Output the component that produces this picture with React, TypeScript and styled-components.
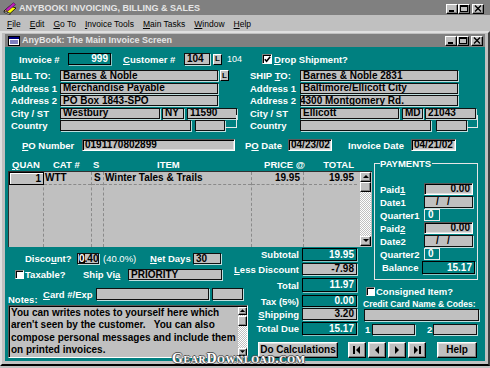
import React from "react";
import styled, { createGlobalStyle, css } from "styled-components";

const TEAL = "#008080";
const FACE = "#c0c0c0";
const FONT = `"Liberation Sans", Arial, Helvetica, sans-serif`;

const GlobalStyle = createGlobalStyle`
  *, *::before, *::after { box-sizing: border-box; }
  html, body { margin: 0; padding: 0; background: ${FACE}; }
  body { width: 490px; height: 368px; overflow: hidden; font-family: ${FONT}; }
  #root { width: 490px; height: 368px; }
`;

const Screen = styled.div`
  position: relative;
  width: 490px;
  height: 368px;
  display: flex;
  flex-direction: column;
  background: ${FACE};
  overflow: hidden;
`;

const AppTitleBar = styled.div`
  flex: none;
  height: 15px;
  padding: 2px 6px 0 3px;
  display: flex;
  align-items: center;
  background: #808080;
  color: #e6e6e6;
  font: bold 9px/11px ${FONT};
  white-space: nowrap;
`;

const ChildTitleBar = styled(AppTitleBar)`
  height: 13px;
  padding: 0 2px 0 3px;
`;

const TitleText = styled.span<{ $ml: number }>`
  margin-left: ${(p) => p.$ml}px;
`;

const CtlGroup = styled.div`
  margin-left: auto;
  display: flex;
  align-items: center;
`;

const CtlButton = styled.span<{ $gap?: number }>`
  flex: none;
  width: 12px;
  height: 10px;
  margin-left: ${(p) => p.$gap ?? 0}px;
  background: ${FACE};
  border: 1px solid;
  border-color: #fff #000 #000 #fff;
  box-shadow: inset -1px -1px #808080;
  display: flex;
  align-items: center;
  justify-content: center;
`;

const MenuBar = styled.div`
  flex: none;
  height: 16px;
  padding: 1px 0 0 2.5px;
  display: flex;
  align-items: center;
  font: 8.5px/10px ${FONT};
  color: #000;
`;

const MenuItem = styled.span`
  padding: 0 4.5px;
  white-space: nowrap;
`;

const U = styled.span`
  text-decoration: underline;
  text-underline-offset: 1px;
`;

const ChildWindow = styled.div`
  flex: none;
  height: 335px;
  display: flex;
  flex-direction: column;
  border: 2px solid;
  border-color: #dfdfdf #404040 #000 #dfdfdf;
  padding: 1px 3px 3px 3px;
  background: ${FACE};
`;

const Teal = styled.div`
  flex: 1;
  display: flex;
  flex-direction: column;
  background: ${TEAL};
  color: #fff;
  font: bold 9.5px/11px ${FONT};
`;

/* ---------- generic form parts ---------- */

const LabelBox = styled.span<{
  $w?: number;
  $ml?: number;
  $pl?: number;
  $end?: boolean;
  $light?: boolean;
  $size?: number;
}>`
  flex: none;
  ${(p) => p.$w !== undefined && css`width: ${p.$w}px;`}
  margin-left: ${(p) => p.$ml ?? 0}px;
  padding-left: ${(p) => p.$pl ?? 0}px;
  display: flex;
  align-items: center;
  justify-content: ${(p) => (p.$end ? "flex-end" : "flex-start")};
  white-space: pre;
  color: #fff;
  font-weight: ${(p) => (p.$light ? "normal" : "bold")};
  font-size: ${(p) => p.$size ?? 9.5}px;
  line-height: 11px;
`;

type LabelProps = React.ComponentProps<typeof LabelBox>;

const Label = ({ children, ...rest }: LabelProps) => (
  <LabelBox {...rest}>
    <span>{children}</span>
  </LabelBox>
);

type FieldKind = "gray" | "deep" | "teal" | "quarter";

const kindStyles: Record<FieldKind, ReturnType<typeof css>> = {
  gray: css`
    background: ${FACE};
    color: #000;
    border: 1px solid #101010;
    box-shadow: 1px 1px 0 rgba(255, 255, 255, 0.75);
  `,
  deep: css`
    background: ${FACE};
    color: #000;
    border: 1px solid;
    border-color: #5a5a5a #fff #fff #5a5a5a;
    box-shadow: inset 1px 1px #000, inset -1px -1px #dfdfdf;
  `,
  teal: css`
    background: ${TEAL};
    color: #fff;
    border: 1px solid #000;
    box-shadow: 1px 1px 0 rgba(255, 255, 255, 0.55);
  `,
  quarter: css`
    background: ${TEAL};
    color: #fff;
    border: 1px solid #e8e8e8;
  `,
};

const Field = styled.div<{
  $w: number;
  $h?: number;
  $ml?: number;
  $kind?: FieldKind;
  $align?: "left" | "right" | "center";
  $pl?: number;
  $indent?: number;
}>`
  flex: none;
  width: ${(p) => p.$w}px;
  height: ${(p) => p.$h ?? 11}px;
  margin-left: ${(p) => p.$ml ?? 0}px;
  display: flex;
  align-items: center;
  justify-content: ${(p) =>
    p.$align === "right" ? "flex-end" : p.$align === "center" ? "center" : "flex-start"};
  padding: 0 2px 0 ${(p) => p.$pl ?? 2}px;
  overflow: hidden;
  white-space: pre;
  font: bold 10px/10px ${FONT};
  text-indent: ${(p) => p.$indent ?? 0}px;
  ${(p) => kindStyles[p.$kind ?? "gray"]}
`;

const Sel = styled.span`
  background: #000;
  color: #fff;
`;

const SmallButton = styled.span<{ $ml?: number }>`
  flex: none;
  width: 9px;
  height: 11px;
  margin-left: ${(p) => p.$ml ?? 0}px;
  background: ${FACE};
  border: 1px solid;
  border-color: #fff #000 #000 #fff;
  color: #000;
  display: flex;
  align-items: center;
  justify-content: center;
  font: bold 8px/8px ${FONT};
`;

const CheckBox = styled.span<{ $ml?: number; $size?: number }>`
  flex: none;
  width: ${(p) => p.$size ?? 10}px;
  height: ${(p) => p.$size ?? 10}px;
  margin-left: ${(p) => p.$ml ?? 0}px;
  background: #fff;
  border: 1px solid;
  border-color: #808080 #fff #fff #808080;
  box-shadow: inset 1px 1px #000;
  display: flex;
  align-items: center;
  justify-content: center;
`;

/* ---------- top section ---------- */

const InvoiceRow = styled.div`
  flex: none;
  margin-top: 6px;
  height: 12px;
  padding-left: 14px;
  display: flex;
  align-items: center;
`;

const AddressRow = styled.div`
  flex: none;
  margin-top: 5px;
  display: flex;
`;

const AddressBlock = styled.div<{ $ml: number; $w?: number; $labelW: number }>`
  flex: none;
  margin-left: ${(p) => p.$ml}px;
  ${(p) => p.$w !== undefined && css`width: ${p.$w}px;`}
  display: grid;
  grid-template-columns: ${(p) => p.$labelW}px auto;
  grid-auto-rows: 11px;
  row-gap: 1.5px;
`;

const AddrFields = styled.div`
  display: flex;
  align-items: center;
`;

const Bracket = styled.span<{ $w: number }>`
  flex: none;
  align-self: flex-start;
  width: ${(p) => p.$w}px;
  height: 13px;
  margin-top: -5px;
  border-right: 1px solid #e8e8e8;
  border-bottom: 1px solid #e8e8e8;
`;

const PoRow = styled.div`
  flex: none;
  margin-top: 8px;
  height: 12px;
  padding-left: 17px;
  display: flex;
  align-items: center;
`;

/* ---------- lower section ---------- */

const Lower = styled.div`
  flex: none;
  margin: 7px 0 0 3px;
  display: grid;
  grid-template-columns: 242px 112px 12px 106px;
  grid-template-rows: 89px 34px 56px 24px;
  grid-template-areas:
    "table table table pay"
    "form totals . pay"
    "form totals right right"
    "form buttons buttons buttons";
`;

const LineItems = styled.div`
  grid-area: table;
  display: flex;
  flex-direction: column;
`;

const GridHeader = styled.div`
  height: 13px;
  display: flex;
  align-items: center;
`;

const HeadCell = styled.span<{ $w: number; $pl?: number; $pr?: number; $align?: "left" | "center" | "right" }>`
  flex: none;
  width: ${(p) => p.$w}px;
  padding-left: ${(p) => p.$pl ?? 0}px;
  padding-right: ${(p) => p.$pr ?? 0}px;
  text-align: ${(p) => p.$align ?? "left"};
  white-space: nowrap;
  color: #fff;
  font: bold 9.5px/11px ${FONT};
`;

const GridBody = styled.div`
  width: 364px;
  height: 76px;
  display: flex;
  background: ${FACE};
  border-top: 1px solid #303030;
  border-left: 1px solid #303030;
`;

const GridColumn = styled.div<{ $w: number; $last?: boolean }>`
  flex: none;
  width: ${(p) => p.$w}px;
  display: flex;
  flex-direction: column;
  border-right: 1px dashed ${(p) => (p.$last ? "transparent" : "#8a8a8a")};
`;

const GridCell = styled.div<{ $align?: "left" | "center" | "right"; $pl?: number; $pr?: number; $focus?: boolean }>`
  height: 13px;
  display: flex;
  align-items: center;
  justify-content: ${(p) =>
    p.$align === "right" ? "flex-end" : p.$align === "center" ? "center" : "flex-start"};
  padding: 0 ${(p) => p.$pr ?? 0}px 0 ${(p) => p.$pl ?? 0}px;
  border-bottom: 1px dashed #8a8a8a;
  color: #000;
  white-space: pre;
  font: bold 10px/10px ${FONT};
  ${(p) =>
    p.$focus &&
    css`
      border: 1px solid #000;
      box-shadow: inset 1px 1px #fff;
      margin-right: -1px;
    `}
`;

const GridScrollCol = styled.div`
  flex: none;
  width: 14px;
  padding: 0 1px 1px 2px;
  display: flex;
`;

const VScroll = styled.div<{ $w: number }>`
  flex: none;
  width: ${(p) => p.$w}px;
  display: flex;
  flex-direction: column;
  background: repeating-conic-gradient(#fff 0 25%, ${FACE} 0 50%) 0 0 / 2px 2px;
`;

const ScrollPart = styled.span<{ $h: number; $mt?: string }>`
  flex: none;
  height: ${(p) => p.$h}px;
  margin-top: ${(p) => p.$mt ?? "0"};
  background: ${FACE};
  border: 1px solid;
  border-color: #fff #000 #000 #fff;
  box-shadow: inset -1px -1px #808080;
  display: flex;
  align-items: center;
  justify-content: center;
`;

/* payments */

const PayFrame = styled.div`
  grid-area: pay;
  margin-top: 5px;
  width: 104px;
  height: 117px;
  border: 1px solid #e6e6e6;
  display: flex;
  flex-direction: column;
`;

const PayLegend = styled.span`
  align-self: flex-start;
  margin: -6px 0 0 5px;
  padding: 0 1px 0 0;
  height: 11px;
  background: ${TEAL};
  font: bold 9.5px/11px ${FONT};
`;

const PayRow = styled.div<{ $mt: number; $h?: number }>`
  flex: none;
  margin-top: ${(p) => p.$mt}px;
  height: ${(p) => p.$h ?? 12}px;
  display: flex;
  align-items: center;
`;

/* totals */

const TotalsColumn = styled.div`
  grid-area: totals;
  display: flex;
  flex-direction: column;
`;

const TotalRow = styled.div<{ $mt: number; $h: number }>`
  flex: none;
  margin-top: ${(p) => p.$mt}px;
  height: ${(p) => p.$h}px;
  display: flex;
  align-items: center;
`;

/* right column */

const RightColumn = styled.div`
  grid-area: right;
  display: flex;
  flex-direction: column;
`;

const RightRow = styled.div<{ $mt: number; $h: number }>`
  flex: none;
  margin-top: ${(p) => p.$mt}px;
  height: ${(p) => p.$h}px;
  display: flex;
  align-items: center;
`;

/* buttons */

const ButtonRow = styled.div`
  grid-area: buttons;
  display: flex;
  align-items: flex-start;
  padding-top: 5px;
`;

const PushButton = styled.span<{ $w: number; $ml: number }>`
  flex: none;
  width: ${(p) => p.$w}px;
  height: 16px;
  margin-left: ${(p) => p.$ml}px;
  background: ${FACE};
  border: 1px solid;
  border-color: #fff #000 #000 #fff;
  box-shadow: inset -1px -1px #808080, inset 1px 1px #dfdfdf;
  display: flex;
  align-items: center;
  justify-content: center;
  color: #000;
  font: bold 10px/10px ${FONT};
  white-space: nowrap;
`;

/* left form */

const FormColumn = styled.div`
  grid-area: form;
  display: flex;
  flex-direction: column;
`;

const FormRow = styled.div<{ $mt: number; $h: number }>`
  flex: none;
  margin-top: ${(p) => p.$mt}px;
  height: ${(p) => p.$h}px;
  display: flex;
  align-items: center;
`;

const NotesLabel = styled.span`
  flex: none;
  align-self: flex-end;
  width: 35px;
  height: 10px;
  margin-bottom: -5px;
  color: #fff;
  font: bold 9.5px/10px ${FONT};
`;

const NotesBox = styled.div`
  flex: none;
  margin-top: 5px;
  width: 240px;
  height: 53px;
  display: flex;
  background: ${FACE};
  border: 1px solid;
  border-color: #5a5a5a #fff #fff #5a5a5a;
  box-shadow: inset 1px 1px #000;
`;

const NotesText = styled.div`
  flex: 1;
  padding: 1px 0 0 2px;
  color: #000;
  font: bold 10px/12.3px ${FONT};
  white-space: pre;
`;

const NotesScroll = styled.div`
  flex: none;
  padding: 1px 0 1px 0;
  display: flex;
`;

const Watermark = styled.span`
  position: absolute;
  left: 172px;
  top: 351px;
  color: #fff;
  font: bold 14px/16px "Liberation Serif", "Times New Roman", serif;
  font-variant: small-caps;
  letter-spacing: 0.6px;
  text-shadow: 1px 0 #555, -1px 0 #555, 0 1px #555, 0 -1px #555;
  pointer-events: none;
`;

/* ---------- icons ---------- */

const AppIcon = () => (
  <svg width="14" height="13" viewBox="0 0 14 13">
    <path d="M1 9 L7 4 L13 6 L7 11.5 Z" fill="#ffff00" stroke="#000" strokeWidth="0.8" />
    <path d="M1 9 L7 11.5 L7 12.8 L1 10.3 Z" fill="#fff" stroke="#000" strokeWidth="0.6" />
    <path d="M2.5 7.5 L10.5 0.8 L12.5 2.6 L4.5 9.3 Z" fill="#c020c0" stroke="#400040" strokeWidth="0.6" />
    <path d="M2.5 7.5 L4.5 9.3 L1.5 10 Z" fill="#ffd0a0" stroke="#000" strokeWidth="0.5" />
  </svg>
);

const ChildIcon = () => (
  <svg width="12" height="10" viewBox="0 0 12 10">
    <rect x="0.5" y="0.5" width="11" height="9" fill="#fff" stroke="#000" />
    <rect x="1" y="1" width="10" height="2" fill="#000080" />
    <path d="M2 5 H10 M2 7 H10" stroke="#000080" strokeWidth="1" />
  </svg>
);

const MinGlyph = () => (
  <svg width="8" height="7" viewBox="0 0 8 7">
    <rect x="1" y="5" width="5" height="2" fill="#000" />
  </svg>
);
const MaxGlyph = () => (
  <svg width="8" height="7" viewBox="0 0 8 7">
    <rect x="0.5" y="0.5" width="7" height="6" fill="none" stroke="#000" />
    <rect x="0" y="0" width="8" height="2" fill="#000" />
  </svg>
);
const CloseGlyph = () => (
  <svg width="8" height="7" viewBox="0 0 8 7">
    <path d="M1 0.5 L7 6.5 M7 0.5 L1 6.5" stroke="#000" strokeWidth="1.4" />
  </svg>
);

const Tri = ({ dir }: { dir: "up" | "down" }) => (
  <svg width="8" height="8" viewBox="0 0 8 8">
    <path d={dir === "up" ? "M1 5 L4 2 L7 5 Z" : "M1 2 L4 5 L7 2 Z"} fill="#000" />
  </svg>
);

const NavGlyph = ({ kind }: { kind: "first" | "prev" | "next" | "last" }) => {
  const parts: Record<string, React.ReactNode> = {
    first: (
      <>
        <rect x="1" y="1" width="2" height="8" fill="#000" />
        <path d="M8 1 L4 5 L8 9 Z" fill="#000" />
      </>
    ),
    prev: <path d="M7 1 L3 5 L7 9 Z" fill="#000" />,
    next: <path d="M3 1 L7 5 L3 9 Z" fill="#000" />,
    last: (
      <>
        <path d="M2 1 L6 5 L2 9 Z" fill="#000" />
        <rect x="7" y="1" width="2" height="8" fill="#000" />
      </>
    ),
  };
  return (
    <svg width="10" height="10" viewBox="0 0 10 10">
      {parts[kind]}
    </svg>
  );
};

const Check = () => (
  <svg width="7" height="7" viewBox="0 0 7 7">
    <path d="M0.8 3.2 L2.6 5.2 L6.2 0.8" fill="none" stroke="#000" strokeWidth="1.6" />
  </svg>
);

/* ---------- app ---------- */

export default function App() {
  return (
    <>
      <GlobalStyle />
      <Screen>
        <AppTitleBar>
          <AppIcon />
          <TitleText $ml={2}>ANYBOOK! INVOICING, BILLING &amp; SALES</TitleText>
          <CtlGroup>
            <CtlButton><MinGlyph /></CtlButton>
            <CtlButton><MaxGlyph /></CtlButton>
            <CtlButton $gap={2}><CloseGlyph /></CtlButton>
          </CtlGroup>
        </AppTitleBar>

        <MenuBar>
          <MenuItem><U>F</U>ile</MenuItem>
          <MenuItem><U>E</U>dit</MenuItem>
          <MenuItem><U>G</U>o To</MenuItem>
          <MenuItem><U>I</U>nvoice Tools</MenuItem>
          <MenuItem><U>M</U>ain Tasks</MenuItem>
          <MenuItem><U>W</U>indow</MenuItem>
          <MenuItem><U>H</U>elp</MenuItem>
        </MenuBar>

        <ChildWindow>
          <ChildTitleBar>
            <ChildIcon />
            <TitleText $ml={2}>AnyBook: The Main Invoice Screen</TitleText>
            <CtlGroup>
              <CtlButton><MinGlyph /></CtlButton>
              <CtlButton><MaxGlyph /></CtlButton>
              <CtlButton $gap={2}><CloseGlyph /></CtlButton>
            </CtlGroup>
          </ChildTitleBar>

          <Teal>
            <InvoiceRow>
              <Label $w={49}>Invoice #</Label>
              <Field $w={43} $h={12} $kind="teal" $align="right">999</Field>
              <Label $w={61} $ml={12}><U>C</U>ustomer #</Label>
              <Field $w={26} $h={12} $align="left">104</Field>
              <SmallButton $ml={3}>L</SmallButton>
              <Label $w={35} $ml={5} $light $size={9}>104</Label>
              <CheckBox><Check /></CheckBox>
              <Label $ml={2}><U>D</U>rop Shipment?</Label>
            </InvoiceRow>

            <AddressRow>
              <AddressBlock $ml={6} $w={239} $labelW={49}>
                <Label><U>B</U>ILL TO:</Label>
                <AddrFields>
                  <Field $w={158}>Barnes &amp; Noble</Field>
                  <SmallButton $ml={2}>L</SmallButton>
                </AddrFields>
                <Label>Address 1</Label>
                <AddrFields><Field $w={158}>Merchandise Payable</Field></AddrFields>
                <Label>Address 2</Label>
                <AddrFields><Field $w={158}>PO Box 1843-SPO</Field></AddrFields>
                <Label>City / ST</Label>
                <AddrFields>
                  <Field $w={100}>Westbury</Field>
                  <Field $w={22} $ml={2}>NY</Field>
                  <Field $w={50} $ml={3}>11590</Field>
                </AddrFields>
                <Label>Country</Label>
                <AddrFields>
                  <Field $w={131} />
                  <Field $w={30} $ml={4} />
                  <Bracket $w={12} />
                </AddrFields>
              </AddressBlock>

              <AddressBlock $ml={0} $labelW={50}>
                <Label>SHIP <U>T</U>O:</Label>
                <AddrFields><Field $w={158}>Barnes &amp; Noble 2831</Field></AddrFields>
                <Label>Address 1</Label>
                <AddrFields><Field $w={158}>Baltimore/Ellicott City</Field></AddrFields>
                <Label>Address 2</Label>
                <AddrFields><Field $w={158} $indent={-3}>4300 Montgomery Rd.</Field></AddrFields>
                <Label>City / ST</Label>
                <AddrFields>
                  <Field $w={99}>Ellicott</Field>
                  <Field $w={21} $ml={3}>MD</Field>
                  <Field $w={51} $ml={2}>21043</Field>
                </AddrFields>
                <Label>Country</Label>
                <AddrFields>
                  <Field $w={131} />
                  <Field $w={31} $ml={5} />
                  <Bracket $w={11} />
                </AddrFields>
              </AddressBlock>
            </AddressRow>

            <PoRow>
              <Label $w={60}><U>P</U>O Number</Label>
              <Field $w={153} $h={12} $kind="deep">0191170802899</Field>
              <Label $w={43} $ml={10}>P<U>O</U> Date</Label>
              <Field $w={44} $h={12} $kind="deep">04/23/02</Field>
              <Label $w={63} $ml={16}>Invoice Date</Label>
              <Field $w={45} $h={12} $kind="deep">04/21/02</Field>
            </PoRow>

            <Lower>
              <LineItems>
                <GridHeader>
                  <HeadCell $w={36} $align="center"><U>Q</U>UAN</HeadCell>
                  <HeadCell $w={48} $pl={9}>CAT #</HeadCell>
                  <HeadCell $w={11} $pl={1}>S</HeadCell>
                  <HeadCell $w={148} $pl={54}>ITEM</HeadCell>
                  <HeadCell $w={54} $align="right">PRICE @</HeadCell>
                  <HeadCell $w={51} $pr={2} $align="right">TOTAL</HeadCell>
                </GridHeader>
                <GridBody>
                  <GridColumn $w={35}>
                    <GridCell $align="right" $pr={2} $focus>1</GridCell>
                  </GridColumn>
                  <GridColumn $w={48}>
                    <GridCell $pl={1}>WTT</GridCell>
                  </GridColumn>
                  <GridColumn $w={12}>
                    <GridCell $pl={2}>S</GridCell>
                  </GridColumn>
                  <GridColumn $w={148}>
                    <GridCell $pl={1}>Winter Tales &amp; Trails</GridCell>
                  </GridColumn>
                  <GridColumn $w={52}>
                    <GridCell $align="right" $pr={3}>19.95</GridCell>
                  </GridColumn>
                  <GridColumn $w={54} $last>
                    <GridCell $align="right" $pr={3}>19.95</GridCell>
                  </GridColumn>
                  <GridScrollCol>
                    <VScroll $w={11}>
                      <ScrollPart $h={10}><Tri dir="up" /></ScrollPart>
                      <ScrollPart $h={10} />
                      <ScrollPart $h={10} $mt="auto"><Tri dir="down" /></ScrollPart>
                    </VScroll>
                  </GridScrollCol>
                </GridBody>
              </LineItems>

              <PayFrame>
                <PayLegend>PAYMENTS</PayLegend>
                <PayRow $mt={14}>
                  <Label $w={49} $pl={5}>Paid<U>1</U></Label>
                  <Field $w={49} $h={12} $kind="deep" $align="right">0.00</Field>
                </PayRow>
                <PayRow $mt={1}>
                  <Label $w={49} $pl={5}>Date1</Label>
                  <Field $w={49} $h={12} $pl={11}>{"/   /"}</Field>
                </PayRow>
                <PayRow $mt={1}>
                  <Label $w={49} $pl={5}>Quarter1</Label>
                  <Field $w={16} $h={12} $kind="quarter" $pl={3}>0</Field>
                </PayRow>
                <PayRow $mt={1}>
                  <Label $w={49} $pl={5}>Paid<U>2</U></Label>
                  <Field $w={49} $h={12} $kind="deep" $align="right">0.00</Field>
                </PayRow>
                <PayRow $mt={1}>
                  <Label $w={49} $pl={5}>Date2</Label>
                  <Field $w={49} $h={12} $pl={11}>{"/   /"}</Field>
                </PayRow>
                <PayRow $mt={1}>
                  <Label $w={49} $pl={5}>Quarter2</Label>
                  <Field $w={16} $h={12} $kind="quarter" $pl={3}>0</Field>
                </PayRow>
                <PayRow $mt={1} $h={13}>
                  <Label $w={47} $pl={7}>Balance</Label>
                  <Field $w={53} $h={13} $kind="teal" $align="right">15.17</Field>
                </PayRow>
              </PayFrame>

              <FormColumn>
                <FormRow $mt={6} $h={11}>
                  <Label $w={52} $ml={17}>Disco<U>u</U>nt?</Label>
                  <Field $w={22} $pl={1}><Sel>0</Sel>.40</Field>
                  <Label $w={47} $ml={4} $light>(40.0%)</Label>
                  <Label $w={43}><U>N</U>et Days</Label>
                  <Field $w={28}>30</Field>
                </FormRow>
                <FormRow $mt={5} $h={11}>
                  <CheckBox $ml={7} $size={9} />
                  <Label $w={58} $ml={1}>Taxable?</Label>
                  <Label $w={45}>Ship Vi<U>a</U></Label>
                  <Field $w={94}>PRIORITY</Field>
                </FormRow>
                <FormRow $mt={8} $h={12}>
                  <NotesLabel>Notes:</NotesLabel>
                  <Label $w={53}><U>C</U>ard #/Exp</Label>
                  <Field $w={113} $h={12} />
                  <Field $w={31} $h={12} $ml={3} />
                </FormRow>
                <NotesBox>
                  <NotesText>
                    {"You can writes notes to yourself here which\naren't seen by the customer.   You can also\ncompose personal messages and include them\non printed invoices."}
                  </NotesText>
                  <NotesScroll>
                    <VScroll $w={9}>
                      <ScrollPart $h={8}><Tri dir="up" /></ScrollPart>
                      <ScrollPart $h={10} $mt="1px" />
                      <ScrollPart $h={8} $mt="auto"><Tri dir="down" /></ScrollPart>
                    </VScroll>
                  </NotesScroll>
                </NotesBox>
              </FormColumn>

              <TotalsColumn>
                <TotalRow $mt={1} $h={13}>
                  <Label $w={49} $end>Subtotal</Label>
                  <Field $w={55} $h={13} $ml={3} $kind="teal" $align="right">19.95</Field>
                </TotalRow>
                <TotalRow $mt={2} $h={12}>
                  <Label $w={49} $end><U>L</U>ess Discount</Label>
                  <Field $w={55} $h={12} $ml={3} $align="right">-7.98</Field>
                </TotalRow>
                <TotalRow $mt={3} $h={14}>
                  <Label $w={49} $end>Total</Label>
                  <Field $w={55} $h={14} $ml={3} $kind="teal" $align="right">11.97</Field>
                </TotalRow>
                <TotalRow $mt={3} $h={12}>
                  <Label $w={49} $end>Tax (5%)</Label>
                  <Field $w={55} $h={12} $ml={3} $kind="teal" $align="right">0.00</Field>
                </TotalRow>
                <TotalRow $mt={1} $h={12}>
                  <Label $w={49} $end><U>S</U>hipping</Label>
                  <Field $w={55} $h={12} $ml={3} $align="right">3.20</Field>
                </TotalRow>
                <TotalRow $mt={2} $h={13}>
                  <Label $w={49} $end>Total Due</Label>
                  <Field $w={55} $h={13} $ml={3} $kind="teal" $align="right">15.17</Field>
                </TotalRow>
              </TotalsColumn>

              <RightColumn>
                <RightRow $mt={6} $h={9}>
                  <CheckBox $ml={4} $size={9} />
                  <Label $ml={1}>Consigned Item?</Label>
                </RightRow>
                <RightRow $mt={3} $h={10}>
                  <Label $ml={1} $size={8.6}>Credit Card Name &amp; Codes:</Label>
                </RightRow>
                <RightRow $mt={0} $h={12}>
                  <Field $w={115} $h={12} $ml={2} />
                </RightRow>
                <RightRow $mt={3} $h={11}>
                  <Label $w={7} $ml={3}>1</Label>
                  <Field $w={43} $h={11} />
                  <Label $w={6} $ml={12}>2</Label>
                  <Field $w={44} $h={11} />
                </RightRow>
              </RightColumn>

              <ButtonRow>
                <PushButton $w={80} $ml={8}>Do Calculations</PushButton>
                <PushButton $w={18} $ml={10}><NavGlyph kind="first" /></PushButton>
                <PushButton $w={18} $ml={2}><NavGlyph kind="prev" /></PushButton>
                <PushButton $w={18} $ml={2}><NavGlyph kind="next" /></PushButton>
                <PushButton $w={18} $ml={2}><NavGlyph kind="last" /></PushButton>
                <PushButton $w={40} $ml={11}>Help</PushButton>
              </ButtonRow>
            </Lower>
          </Teal>
        </ChildWindow>
        <Watermark>GearDownload.com</Watermark>
      </Screen>
    </>
  );
}
